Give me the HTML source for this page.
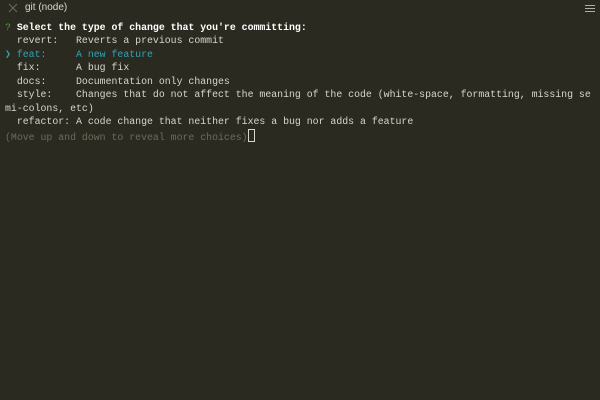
<!DOCTYPE html>
<html><head><style>
html,body{margin:0;padding:0;}
body{width:600px;height:400px;background:#2a2a20;overflow:hidden;position:relative;font-family:"Liberation Mono",monospace;}
.title{position:absolute;left:25px;top:2px;font:10px "Liberation Sans",sans-serif;color:#d8d8d0;}
.x{position:absolute;left:8px;top:3px;}
.menu{position:absolute;left:585px;top:5px;width:10px;}
.menu div{height:1px;background:#b0b0a8;margin-bottom:2px;}
pre{position:absolute;left:5px;top:21px;margin:0;font-family:"Liberation Mono",monospace;font-size:9.87px;line-height:13.45px;color:#d6d6cc;}
.b{color:#fff;font-weight:bold}
.g{color:#4d9a3a}
.c{color:#2aa6b8}
.h{color:#6c6c5c}
.cur{display:inline-block;width:5px;height:11px;border:1px solid #d6d6cc;vertical-align:-2px;}
</style></head><body>
<svg class="x" width="10" height="10" viewBox="0 0 10 10"><path d="M1 1L9 9M9 1L1 9" stroke="#6a6a60" stroke-width="1"/></svg>
<div class="title">git (node)</div>
<div class="menu"><div></div><div></div><div></div></div>
<pre><span class="g">?</span> <span class="b">Select the type of change that you're committing:</span>
  revert:   Reverts a previous commit
<span class="c">❯ feat:     A new feature</span>
  fix:      A bug fix
  docs:     Documentation only changes
  style:    Changes that do not affect the meaning of the code (white-space, formatting, missing se
mi-colons, etc)
  refactor: A code change that neither fixes a bug nor adds a feature
<span class="h">(Move up and down to reveal more choices)</span><span class="cur"></span></pre>
</body></html>
